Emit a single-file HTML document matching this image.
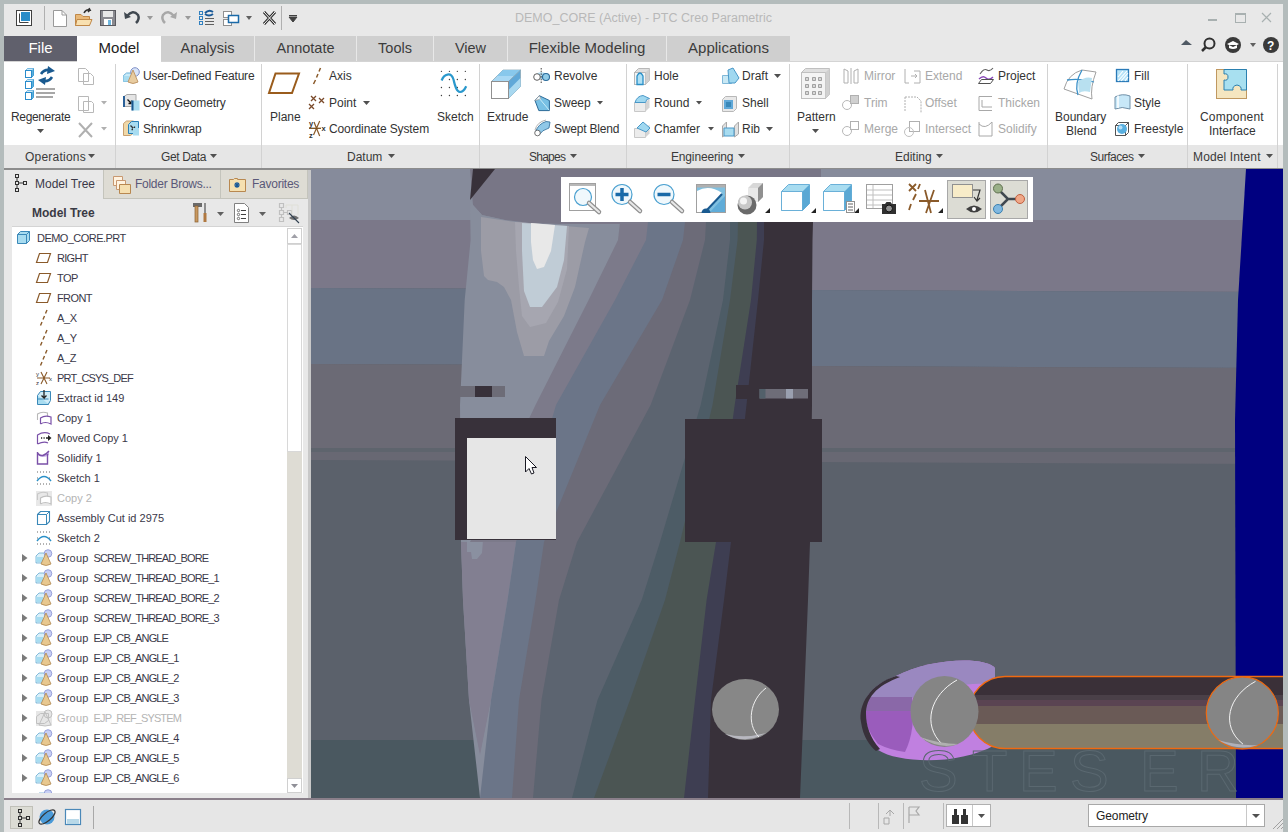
<!DOCTYPE html>
<html><head><meta charset="utf-8">
<style>
*{margin:0;padding:0;box-sizing:border-box}
html,body{width:1288px;height:832px;overflow:hidden;background:#b4bcbc;font-family:"Liberation Sans",sans-serif;color:#333}
.a{position:absolute}
.t{position:absolute;white-space:nowrap;line-height:1}
#title{left:4px;top:4px;width:1279px;height:32px;background:#e8e8e8}
#tabs{left:4px;top:36px;width:1279px;height:25px;background:#e8e8e8}
.tab{position:absolute;top:0;height:25px;background:#cfcfcf;color:#3c3c3c;font-size:14.5px;text-align:center;line-height:24px}
#ribbon{left:4px;top:61px;width:1279px;height:84px;background:#fff;border-top:1px solid #d4d4d4}
#glabels{left:4px;top:145px;width:1279px;height:23px;background:#e6e6e6}
.gl{position:absolute;top:6px;font-size:12px;color:#3a3a3a;white-space:nowrap;line-height:1}
.sep{position:absolute;width:1px;background:#d2d2d2}
.rb{position:absolute;font-size:12px;color:#333;white-space:nowrap;line-height:1}
.dis{color:#a8a8a8}
.arr{display:inline-block;width:0;height:0;border-left:3.5px solid transparent;border-right:3.5px solid transparent;border-top:4px solid #555;vertical-align:middle;margin-left:6px}
#panel{left:4px;top:170px;width:307px;height:628px;background:#e8e8e8}
#tree{left:12px;top:227px;width:291px;height:566px;background:#fff}
.tr{position:absolute;font-size:11px;letter-spacing:-0.45px;color:#353545;white-space:nowrap;line-height:1}
#status{left:0;top:798px;width:1288px;height:34px;background:#e6e6e6}
</style></head><body>
<div class="a" id="title"></div>
<div class="t" style="left:515px;top:11.5px;font-size:12.5px;color:#b8b8b8">DEMO_CORE (Active) - PTC Creo Parametric</div>
<div class="a" id="tabs"></div>
<div class="tab" style="left:4px;top:36px;width:73px;background:#60606c;color:#fff;font-size:15px">File</div>
<div class="tab" style="left:77px;top:36px;width:84px;background:#fff;color:#222;font-size:15px">Model</div>
<div class="tab" style="left:161px;top:36px;width:93px">Analysis</div>
<div class="tab" style="left:255px;top:36px;width:101px">Annotate</div>
<div class="tab" style="left:357px;top:36px;width:76px">Tools</div>
<div class="tab" style="left:434px;top:36px;width:73px">View</div>
<div class="tab" style="left:508px;top:36px;width:158px;font-size:15px">Flexible Modeling</div>
<div class="tab" style="left:667px;top:36px;width:123px;font-size:15px">Applications</div>
<div class="a" id="ribbon"></div>
<div class="a" id="glabels"></div>
<div class="a" style="left:77px;top:61px;width:84px;height:1px;background:#fff"></div>
<div class="a" style="left:4px;top:168px;width:1279px;height:2px;background:#8c8c8c"></div>
<div class="sep" style="left:115px;top:64px;height:104px"></div>
<div class="sep" style="left:261px;top:64px;height:104px"></div>
<div class="sep" style="left:479px;top:64px;height:104px"></div>
<div class="sep" style="left:626px;top:64px;height:104px"></div>
<div class="sep" style="left:789px;top:64px;height:104px"></div>
<div class="sep" style="left:1047px;top:64px;height:104px"></div>
<div class="sep" style="left:1187px;top:64px;height:104px"></div>
<div class="sep" style="left:1277px;top:64px;height:104px"></div>
<div class="rb" style="left:11px;top:111px;letter-spacing:-0.35px">Regenerate</div>
<div class="rb" style="left:143px;top:70px;letter-spacing:-0.2px">User-Defined Feature</div>
<div class="rb" style="left:143px;top:97px;letter-spacing:-0.1px">Copy Geometry</div>
<div class="rb" style="left:143px;top:123px;letter-spacing:-0.15px">Shrinkwrap</div>
<div class="rb" style="left:270px;top:111px">Plane</div>
<div class="rb" style="left:329px;top:70px">Axis</div>
<div class="rb" style="left:329px;top:97px">Point</div>
<div class="rb" style="left:329px;top:123px;letter-spacing:-0.12px">Coordinate System</div>
<div class="rb" style="left:437px;top:111px">Sketch</div>
<div class="rb" style="left:487px;top:111px">Extrude</div>
<div class="rb" style="left:554px;top:70px">Revolve</div>
<div class="rb" style="left:554px;top:97px">Sweep</div>
<div class="rb" style="left:554px;top:123px;letter-spacing:-0.2px">Swept Blend</div>
<div class="rb" style="left:654px;top:70px">Hole</div>
<div class="rb" style="left:654px;top:97px">Round</div>
<div class="rb" style="left:654px;top:123px">Chamfer</div>
<div class="rb" style="left:742px;top:70px">Draft</div>
<div class="rb" style="left:742px;top:97px">Shell</div>
<div class="rb" style="left:742px;top:123px">Rib</div>
<div class="rb" style="left:797px;top:111px">Pattern</div>
<div class="rb dis" style="left:864px;top:70px">Mirror</div>
<div class="rb dis" style="left:864px;top:97px">Trim</div>
<div class="rb dis" style="left:864px;top:123px">Merge</div>
<div class="rb dis" style="left:925px;top:70px">Extend</div>
<div class="rb dis" style="left:925px;top:97px">Offset</div>
<div class="rb dis" style="left:925px;top:123px">Intersect</div>
<div class="rb" style="left:998px;top:70px">Project</div>
<div class="rb dis" style="left:998px;top:97px">Thicken</div>
<div class="rb dis" style="left:998px;top:123px">Solidify</div>
<div class="rb" style="left:1055px;top:111px">Boundary</div>
<div class="rb" style="left:1066px;top:125px">Blend</div>
<div class="rb" style="left:1134px;top:70px">Fill</div>
<div class="rb" style="left:1134px;top:97px">Style</div>
<div class="rb" style="left:1134px;top:123px">Freestyle</div>
<div class="rb" style="left:1200px;top:111px;letter-spacing:0.2px">Component</div>
<div class="rb" style="left:1209px;top:125px">Interface</div>
<div class="gl" style="left:25px;top:151px;letter-spacing:0.23px">Operations</div>
<div class="gl" style="left:161px;top:151px;letter-spacing:-0.37px">Get Data</div>
<div class="gl" style="left:347px;top:151px">Datum</div>
<div class="gl" style="left:529px;top:151px;letter-spacing:-0.75px">Shapes</div>
<div class="gl" style="left:671px;top:151px;letter-spacing:-0.16px">Engineering</div>
<div class="gl" style="left:895px;top:151px">Editing</div>
<div class="gl" style="left:1090px;top:151px;letter-spacing:-0.48px">Surfaces</div>
<div class="gl" style="left:1193px;top:151px;letter-spacing:0.13px">Model Intent</div>

<svg class="a" style="left:0;top:60px" width="1288" height="110" viewBox="0 60 1288 110">
<g fill="none">
<!-- group label arrows -->
<path d="M88,154 h7 l-3.5,4z M210,154 h7 l-3.5,4z M388,154 h7 l-3.5,4z M570,154 h7 l-3.5,4z M738,154 h7 l-3.5,4z M936,154 h7 l-3.5,4z M1138,154 h7 l-3.5,4z M1266,154 h7 l-3.5,4z" fill="#505050"/>
<!-- dropdown arrows in ribbon -->
<path d="M37,129 h7 l-3.5,4z M812,129 h7 l-3.5,4z" fill="#505050"/>
<path d="M101,101 h6 l-3,3.5z M101,127 h6 l-3,3.5z" fill="#b0b0b0"/>
<path d="M363,101 h7 l-3.5,4z M597,101 h6 l-3,3.5z M696,101 h6 l-3,3.5z M708,127 h6 l-3,3.5z M774,74 h7 l-3.5,4z M766,127 h7 l-3.5,4z" fill="#505050"/>
<!-- Regenerate -->
<g id="cube3">
<path d="M25.5,70.5 l2,-2 h6 v7 l-2,2 h-6z" fill="#fff" stroke="#2a8ccc"/>
<path d="M25.5,70.5 l2,-2 h6 l-2,2z" fill="#c8e8f8"/>
<path d="M31.5,70.5 l2,-2 v7 l-2,2z" fill="#5ab0dc"/>
<rect x="25.5" y="70.5" width="6" height="7" fill="#fff" stroke="#2a8ccc"/>
</g>
<use href="#cube3" y="11"/>
<use href="#cube3" y="22"/>
<path d="M36,89 H55 M36,93 H55 M36,97 H53" stroke="#8a8a8a" stroke-width="1.3"/>
<path d="M41,74 Q44,69 50,70" stroke="#1a5a90" stroke-width="2.6"/>
<path d="M48,66 L55,71 L47,74 Z" fill="#1a5a90"/>
<path d="M52,77 Q49,82 43,81" stroke="#1a5a90" stroke-width="2.6"/>
<path d="M45,85 L38,80 L46,77 Z" fill="#1a5a90"/>
<!-- copy/paste/delete gray -->
<path d="M78.5,68.5 h7 l3,3 v10 h-10z M83.5,73.5 h7 l3,3 v8 h-10z" fill="#fff" stroke="#b8b8b8"/>
<path d="M78.5,96.5 h10 v14 h-10z M83.5,101.5 h8 l2,2 v9 h-10z" fill="#fff" stroke="#b8b8b8"/>
<path d="M79,123 L92,137 M92,123 L79,137" stroke="#b0b0b0" stroke-width="2"/>
<!-- get data icons -->
<path d="M123.5,75.5 l3,-2.5 h6 v6 l-3,2.5 h-6z" fill="#c8eaf8" stroke="#6ab0d8"/>
<rect x="123.5" y="76" width="6" height="5.5" fill="#a8dcf0"/>
<circle cx="135" cy="72" r="4.3" fill="#d8e4f8" stroke="#8090c8"/>
<path d="M133,70 L128,82 Q133,85 138,82 Z" fill="#e8cca0" stroke="#c0986a"/>
<path d="M124,96.5 l3,-2 h9 v10 l-3,2 h-9z" fill="#e4e4e4" stroke="#a8a8a8"/>
<rect x="123" y="96" width="2" height="11" fill="#2a6098"/>
<path d="M127.5,99.5 l4,4 M131.5,100.5 v3 h-3" stroke="#111" stroke-width="1.3"/>
<rect x="131.5" y="100.5" width="8" height="10" fill="#a8dcf0"/>
<rect x="131.5" y="100.5" width="2" height="10" fill="#1a5890"/>
<path d="M123.5,123.5 l3,-2.5 h7 v12 l-3,2.5 h-7z" fill="#f0d8a8" stroke="#c8a070"/>
<path d="M128.5,124.5 l3,-3 h7 v9 l-3,3 h-7z" fill="#a8dcf0" stroke="#2a80b8"/>
<path d="M130.5,125.5 l4,4 M134.5,126.5 v3 h-3" stroke="#333" stroke-width="1.3"/>
<rect x="133" y="128" width="6" height="7.5" fill="#a8dcf0"/>
<!-- Plane -->
<path d="M275.5,73.5 H299 L292,93 H269z" stroke="#9a5c1c" stroke-width="2"/>
<path d="M320.5,68 L319,71.5 M318,74 L316.5,77.5 M315.5,80 L313.5,84" stroke="#8a5a2a" stroke-width="1.5"/>
<path d="M311,96 l5,5 m0,-5 l-5,5 M319,98 l5,5 m0,-5 l-5,5 M309,104 l5,5 m0,-5 l-5,5" stroke="#7a4a2a" stroke-width="1.3"/>
<path d="M314,122 L319.7,136 M319.7,121 L313.5,135" stroke="#8a5a2a" stroke-width="1.2"/>
<path d="M309,128.3 H321" stroke="#7a5020" stroke-width="1.3"/>
<text x="309" y="126" font-size="7.5" fill="#333" font-family="Liberation Sans" font-weight="bold">y</text>
<text x="309" y="137.5" font-size="7.5" fill="#333" font-family="Liberation Sans" font-weight="bold">z</text>
<text x="321.5" y="131" font-size="7.5" fill="#333" font-family="Liberation Sans" font-weight="bold">x</text>
<!-- Sketch -->
<path d="M441.4,71.3h.1M449.4,71.3h.1M457.3,71.3h.1M465.3,71.3h.1M449.4,79.5h.1M457.3,79.5h.1M465.3,79.5h.1M441.4,87.5h.1M449.4,87.5h.1M457.3,87.5h.1M441.4,95.5h.1M449.4,95.5h.1M457.3,95.5h.1M465.3,95.5h.1" stroke="#404040" stroke-width="1.3" stroke-linecap="round"/>
<path d="M441.6,80.5 C444,74 451,71.5 453.5,79.5 C455,86 456.5,92 460,92 C463,92 465,89 466.2,86.3" stroke="#2a98cc" stroke-width="2.2"/>
<!-- Extrude -->
<path d="M491.5,81.5 L503,70 H520.5 L508.5,81.5 Z" fill="#a8d8f4" stroke="#8aa8b8" stroke-width="0.8"/>
<path d="M503,70 H520.5 L514,76 H497Z" fill="#88c8ec"/>
<path d="M508.5,81.5 L520.5,70 V86.5 L508.5,98.5 Z" fill="#60a8d8" stroke="#8aa8b8" stroke-width="0.8"/>
<path d="M508.5,90 L520.5,78 V86.5 L508.5,98.5 Z" fill="#a8d8f0"/>
<rect x="491.5" y="81.5" width="17" height="17" fill="#fff" stroke="#909090"/>
<!-- Revolve, sweep, swept blend -->
<path d="M537,73.5 Q541,71 546,73.5 V80 Q541,78 537,80 Z" fill="#b8e0f4"/>
<circle cx="537" cy="77" r="3.3" fill="#fff" stroke="#606060"/>
<circle cx="546" cy="77" r="3.5" fill="#90cce8" stroke="#2a6a9a" stroke-width="1.1"/>
<path d="M541.2,68 V84" stroke="#404040" stroke-dasharray="1.5,1.2"/>
<path d="M535,100.5 L539.3,95.7 L549.4,100.5 V110.6 H538.8 Z" fill="#78c0e4" stroke="#2a6a98"/>
<path d="M535,100.5 L539.3,95.7 L541,99 Z" fill="#fff" stroke="#909090" stroke-width="0.6"/>
<path d="M539,98 L549,110" stroke="#c8ecf8" stroke-width="1"/>
<path d="M535.5,132 Q538,124 546,121.5 L550,122 L549,128 Q542,130 539,135 Z" fill="#90c8e8" stroke="#2a6a98" stroke-width="0.8"/>
<path d="M535,130 Q537,122 546,120" stroke="#a0a0a0" stroke-width="0.8"/>
<circle cx="537.5" cy="133" r="2.8" fill="#fff" stroke="#505050" stroke-width="0.8"/>
<!-- Engineering icons -->
<path d="M634.5,72.5 l4,-4 h11 v12 l-4,4 h-11z" fill="#e0e0e0" stroke="#b8b8b8"/>
<rect x="634.5" y="72.5" width="11" height="12" fill="#f4f4f4" stroke="#b8b8b8"/>
<path d="M645.5,72.5 l4,-4 v12 l-4,4z" fill="#d0d0d0"/>
<path d="M637,84.5 V76 Q640,70 643,76 V84.5 Z" fill="#b0e0f4" stroke="#2a90c8" stroke-width="1.3"/>
<path d="M634.5,102.5 h11 v9 h-11z" fill="#ececec" stroke="#c8c8c8"/>
<path d="M645.5,102.5 l4,-4 v9 l-4,4z" fill="#d4d4d4"/>
<path d="M635,102.5 Q637,96 643,95.5 L649.5,98.5 Q646,98.5 645.5,102.5 Z" fill="#a0d8f0" stroke="#4a98c8"/>
<path d="M634.5,128.5 h11 v9 h-11z" fill="#ececec" stroke="#c8c8c8"/>
<path d="M645.5,128.5 l4,-4 v9 l-4,4z" fill="#d4d4d4"/>
<path d="M637,128 L643,122 L650,128 L646,132 Z" fill="#a0d8f0" stroke="#4a98c8"/>
<path d="M722.5,75.5 h9 v8 h-9z" fill="#c8e8f4" stroke="#80b8d8"/>
<path d="M728,70 L733,68 L739,78 L735,83 H729 Z" fill="#a0d8f0" stroke="#4a98c8"/>
<path d="M722.5,99.5 l3,-3 h11 v12 l-3,3 h-11z" fill="#e8e8e8" stroke="#b8b8b8"/>
<rect x="724" y="100" width="9" height="9" fill="#60a8d8"/>
<rect x="726" y="102" width="5" height="5" fill="#3a88b8"/>
<path d="M722.5,126 l4,-4 v12 l-4,3z M734.5,126 l4,-4 v12 l-4,3z" fill="#e0e0e0" stroke="#a8a8a8"/>
<path d="M724,128 h10 v8 h-10z" fill="#a8dcf0" stroke="#4a98c8"/>
<!-- Pattern -->
<path d="M801.5,72.5 l4,-4 h24 v26 l-4,4 h-24z" fill="#e0e0e0" stroke="#c0c0c0"/>
<rect x="801.5" y="72.5" width="24" height="26" fill="#f4f4f4" stroke="#c0c0c0"/>
<path d="M825.5,72.5 l4,-4 v26 l-4,4z" fill="#d0d0d0"/>
<path d="M805.5,77.5h3v3h-3z M812.5,77.5h3v3h-3z M818.5,77.5h3v3h-3z M805.5,84.5h3v3h-3z M812.5,84.5h3v3h-3z M818.5,84.5h3v3h-3z M805.5,91.5h3v3h-3z M812.5,91.5h3v3h-3z M818.5,91.5h3v3h-3z" fill="#d8d8d8" stroke="#909090" stroke-width="0.8"/>
<!-- editing gray icons -->
<path d="M844,69 v14 h4 v-12z M858,69 v14 h-4 v-12z M851,68 v16" stroke="#b0b0b0"/>
<rect x="850.5" y="95.5" width="8" height="8" fill="#d0d0d0" stroke="#b0b0b0"/>
<circle cx="847" cy="105" r="4.5" stroke="#b8b8b8"/>
<rect x="850.5" y="121.5" width="8" height="8" fill="#fff" stroke="#b0b0b0"/>
<circle cx="847" cy="131" r="4.5" stroke="#b8b8b8"/>
<path d="M905,69 v14 h4 M914,71 h6 v12 h-6 M911,76 h6 l-2,-2 m2,2 l-2,2" stroke="#b0b0b0"/>
<path d="M905,97 h12 l4,4 v12 M905,97 v14" stroke="#b0b0b0" stroke-dasharray="2,1"/>
<rect x="909.5" y="121.5" width="10" height="10" stroke="#b0b0b0"/>
<circle cx="909" cy="132" r="4.5" stroke="#c0c0c0"/>
<path d="M980,74 Q984,68 987,70 Q990,72 993,68" stroke="#606060" stroke-width="1.1"/>
<path d="M979,79 Q983,75 986,78 Q989,81 993,77" stroke="#8a4ab8" stroke-width="1.4"/>
<path d="M978.5,83.5 l3,-4 h12 l-3,4z" stroke="#505050"/>
<path d="M992,96.5 h-13 v14 h13 M982,100 v7 h10" stroke="#a8a8a8"/>
<path d="M979,122 v14 h13 v-14 M979,124 Q985,130 992,122" stroke="#a8a8a8"/>
<!-- Boundary blend -->
<path d="M1064,89 Q1068,74 1082,70 L1096,72 Q1090,88 1092,99 Q1078,94 1064,89Z" fill="#fff" stroke="#a0a0a0"/>
<path d="M1082,70 Q1074,84 1078,95 M1067,80 Q1080,78 1094,82" stroke="#3a90c8" stroke-width="1.3"/>
<path d="M1078,82 Q1085,76 1092,78 L1090,92 Q1083,90 1079,93 Z" fill="#b8e0f0"/>
<rect x="1116.5" y="69.5" width="12" height="12" fill="#b8e4f8" stroke="#2a7ab8" stroke-width="1.3"/>
<path d="M1118,77 l5,-6 M1118,81 l9,-10 M1121,81 l7,-8 M1125,81 l3,-4" stroke="#fff" stroke-width="1.1"/>
<path d="M1115,97 Q1122,93 1130,96 V109 Q1122,106 1115,109 Z" fill="#c8e8f8" stroke="#7090a8"/>
<path d="M1118,95.5 V108" stroke="#fff" stroke-width="1.5"/>
<path d="M1115.5,125.5 l3,-3 h10 v10 l-3,3 h-10z M1115.5,125.5 h10 v10 M1125.5,125.5 l3,-3" stroke="#404040" stroke-width="0.9"/>
<circle cx="1122" cy="129" r="5" fill="#5ab0e0"/>
<circle cx="1120.5" cy="127.5" r="2" fill="#b8e0f8"/>
<!-- Component interface -->
<rect x="1216.5" y="69.5" width="30" height="29" fill="#f5e6c0" stroke="#c09860"/>
<path d="M1224,69.5 H1246.5 V90 H1241 Q1242,86 1237,85 Q1232,86 1233,90 H1224 V80 Q1228,81 1228,77 Q1228,73 1224,74 Z" fill="#a8e0f0" stroke="#2a80b0"/>
</g>
</svg>

<!-- QAT + window controls -->
<svg class="a" style="left:0;top:0" width="1288" height="170" viewBox="0 0 1288 170">
<g fill="none" stroke-linejoin="miter">
<rect x="16.5" y="10.5" width="15" height="15" fill="#fff" stroke="#404040"/>
<path d="M19.5,13.5 V22.5 H28.5" stroke="#404040"/>
<rect x="21" y="12" width="9" height="9" fill="#2a8cc8"/>
<rect x="44" y="6" width="1" height="24" fill="#b0b0b0"/>
<path d="M53.5,10.5 H62 L66.5,15 V26.5 H53.5 Z" fill="#fff" stroke="#9a9a9a"/>
<path d="M62,10.5 V15 H66.5" stroke="#9a9a9a"/>
<path d="M75.5,14.5 H81 L83,16.5 H89.5 V25.5 H75.5 Z" fill="#e8b878" stroke="#c08848"/>
<path d="M77,19.5 H92 L89.5,25.5 H75.5 Z" fill="#f8e0b0" stroke="#c08848"/>
<path d="M84,13 Q86,9 90,10 L89,8 M90,10 L88,12" stroke="#303030" stroke-width="1.5"/>
<rect x="100.5" y="10.5" width="15" height="15" fill="#8a8a90" stroke="#5a5a60"/>
<rect x="103" y="11" width="10" height="6" fill="#e8e8e8"/>
<rect x="104" y="19" width="8" height="6" fill="#fff"/>
<rect x="108" y="20" width="3" height="5" fill="#70b8e0"/>
<path d="M127,16 Q133,9 138,15 Q140,19 136,23" stroke="#404850" stroke-width="2.5"/>
<path d="M124,12 L125,19 L131,17 Z" fill="#404850"/>
<path d="M147,16 H153 L150,20 Z" fill="#9a9a9a"/>
<path d="M174,16 Q168,9 163,15 Q161,19 165,23" stroke="#a8a8a8" stroke-width="2.5"/>
<path d="M177,12 L176,19 L170,17 Z" fill="#a8a8a8"/>
<path d="M185,16 H191 L188,20 Z" fill="#9a9a9a"/>
<rect x="199.5" y="11.5" width="3" height="3" stroke="#3080c0"/>
<rect x="199.5" y="16.5" width="3" height="3" stroke="#3080c0"/>
<rect x="199.5" y="21.5" width="3" height="3" stroke="#3080c0"/>
<path d="M205,18.5 H214 M205,21.5 H214 M205,24.5 H214" stroke="#606060"/>
<path d="M205,13 Q209,9 213,12 M213,14 Q209,17 205,14" stroke="#1a5a98" stroke-width="2"/>
<rect x="223.5" y="11.5" width="8" height="6" fill="#fff" stroke="#909090"/>
<rect x="223.5" y="19.5" width="8" height="6" fill="#fff" stroke="#909090"/>
<rect x="228.5" y="15.5" width="10" height="7" fill="#fff" stroke="#1a6aa8" stroke-width="1.5"/>
<path d="M246,16 H252 L249,20 Z" fill="#606060"/>
<path d="M264,12 L275,24 M275,12 L264,24" stroke="#303030" stroke-width="3"/>
<path d="M264,12 L275,24 M275,12 L264,24" stroke="#fff" stroke-width="1"/>
<rect x="281" y="6" width="1" height="24" fill="#b0b0b0"/>
<path d="M289,15.5 H297 M289,17 H297 L293,22 Z" stroke="#404040" fill="#404040"/>
<rect x="1208" y="19" width="9" height="2" fill="#a8b0b0"/>
<rect x="1235.5" y="13.5" width="10" height="9" stroke="#a8b0b0"/>
<rect x="1235" y="13" width="11" height="2" fill="#a8b0b0"/>
<path d="M1262,13 L1271,22 M1271,13 L1262,22" stroke="#a8b0b0" stroke-width="1.2"/>
<path d="M1181,45 L1186,40 L1192,45 Z" fill="#505a64"/>
<circle cx="1209.5" cy="43.5" r="5" stroke="#303030" stroke-width="2"/>
<path d="M1206,47 L1202,51" stroke="#303030" stroke-width="2.5"/>
<circle cx="1233" cy="45" r="8" fill="#3a3a3a"/>
<path d="M1227,44 L1233,41 L1239,44 L1233,47 Z M1229,45 V48 Q1233,50 1237,48 V45" fill="#fff"/>
<path d="M1250,43 H1256 L1253,47 Z" fill="#606060"/>
<circle cx="1271" cy="45" r="8" fill="#3a3a3a"/>
<text x="1267" y="50" font-family="Liberation Sans" font-weight="bold" font-size="12" fill="#fff" stroke="none">?</text>
</g>
</svg>

<div class="a" id="panel"></div>
<div class="a" id="tree"></div>
<div class="a" style="left:12px;top:226px;width:291px;height:1px;background:#d4d4d4"></div>
<div class="a" style="left:103px;top:170px;width:118px;height:29px;background:#dedcd4;border:1px solid #c4c4bc;border-top:none"></div>
<div class="a" style="left:220px;top:170px;width:88px;height:29px;background:#dedcd4;border:1px solid #c4c4bc;border-top:none"></div>
<div class="a" style="left:308px;top:170px;width:3px;height:628px;background:#c8c8c8"></div>
<div class="t" style="left:35px;top:177.5px;font-size:12px;color:#3a3848">Model Tree</div>
<div class="t" style="left:135px;top:177.5px;font-size:12px;color:#5a5878;letter-spacing:-0.27px">Folder Brows...</div>
<div class="t" style="left:252px;top:177.5px;font-size:12px;color:#5a5878;letter-spacing:-0.25px">Favorites</div>
<div class="t" style="left:32px;top:206.5px;font-size:12px;font-weight:bold;color:#3a3a44">Model Tree</div>
<div class="a" style="left:287px;top:228px;width:15px;height:565px;background:#dedcd4"></div>
<div class="a" style="left:287px;top:228px;width:15px;height:16px;background:#fff;border:1px solid #d0d0d0"></div>
<div class="a" style="left:287px;top:244px;width:15px;height:208px;background:#fff;border:1px solid #d8d8d8"></div>
<div class="a" style="left:287px;top:778px;width:15px;height:15px;background:#fff;border:1px solid #d0d0d0"></div>
<svg class="a" style="left:0;top:165px" width="311" height="70" viewBox="0 165 311 70">
<g fill="none">
<rect x="15.5" y="174.5" width="3" height="3" stroke="#303030"/>
<rect x="15.5" y="181.5" width="3" height="3" stroke="#303030"/>
<rect x="15.5" y="188.5" width="3" height="3" stroke="#303030"/>
<rect x="23.5" y="181.5" width="3" height="3" stroke="#303030"/>
<path d="M17,178 v3 M17,185 v3 M19,183 h4" stroke="#303030"/>
<path d="M113.5,176.5 h9 v9 h-9z" fill="#fff3e0" stroke="#c89870"/>
<path d="M116.5,180.5 h9 v9 h-9z" fill="#fff3e0" stroke="#c89870"/>
<path d="M119.5,184.5 h11 v9 h-11z" fill="#f5dfb0" stroke="#b88850"/>
<path d="M229.5,179.5 h4 l1,-1 h3 v1 h8 v12 h-16z" fill="#f5e0b0" stroke="#b88850"/>
<path d="M234,185 h6 M237,182 v6 M235,183 l4,4 M239,183 l-4,4" stroke="#1a5a98" stroke-width="1.2"/>
<rect x="193" y="203" width="9" height="4" fill="#6a6a6a"/>
<rect x="195" y="206" width="3" height="16" fill="#c89860" stroke="#8a6030" stroke-width="0.7"/>
<path d="M205,203 v10" stroke="#505050" stroke-width="1.2"/>
<rect x="203.5" y="213" width="3" height="9" fill="#b07840"/>
<path d="M217,212 h7 l-3.5,4z M259,212 h7 l-3.5,4z" fill="#606060"/>
<path d="M234.5,203.5 h10 l4,4 v15 h-14z" fill="#fff" stroke="#808080"/>
<circle cx="238.5" cy="210.5" r="1.2" stroke="#505050" stroke-width="0.8"/><circle cx="238.5" cy="214.5" r="1.2" stroke="#505050" stroke-width="0.8"/><circle cx="238.5" cy="218.5" r="1.2" stroke="#505050" stroke-width="0.8"/><path d="M241,210.5 h5 M241,214.5 h5 M241,218.5 h5" stroke="#404040"/>
<path d="M279.5,203.5 h4 v4 h-4z M279.5,210.5 h4 v4 h-4z M279.5,217.5 h4 v4 h-4z M287.5,210.5 h4 v4 h-4z M281.5,207.5 v3 M281.5,214.5 v3 M283.5,212.5 h4" stroke="#c0c0c0" stroke-width="1.2"/>
<path d="M286,205 h12 M292,205 v10 M298,205 v10 M286,205 v3" stroke="#e0e0d8"/>
<path d="M289,218 Q294,213 299,218 Q294,222 289,218Z" fill="#707070"/>
<path d="M289,213 L299,223" stroke="#304050" stroke-width="1.1"/>
</g>
</svg>
<svg class="a" style="left:287px;top:778px" width="15" height="15"><path d="M4,6 h7 l-3.5,4z" fill="#909098"/></svg>
<svg class="a" style="left:287px;top:228px" width="15" height="16"><path d="M4,10 h7 l-3.5,-4z" fill="#a0a0a8"/></svg>
<div class="a" style="left:0;top:0;width:1288px;height:793px;clip-path:inset(228px 1001px 0 12px)">
<div class="tr" style="left:37px;top:232.6px;letter-spacing:-0.55px;color:#3a3848">DEMO_CORE.PRT</div>
<div class="tr" style="left:57px;top:252.6px;letter-spacing:-0.7px;color:#3a3848">RIGHT</div>
<div class="tr" style="left:57px;top:272.6px;letter-spacing:-0.5px;color:#3a3848">TOP</div>
<div class="tr" style="left:57px;top:292.6px;letter-spacing:-0.6px;color:#3a3848">FRONT</div>
<div class="tr" style="left:57px;top:312.6px;letter-spacing:-0.4px;color:#3a3848">A_X</div>
<div class="tr" style="left:57px;top:332.6px;letter-spacing:-0.4px;color:#3a3848">A_Y</div>
<div class="tr" style="left:57px;top:352.6px;letter-spacing:-0.4px;color:#3a3848">A_Z</div>
<div class="tr" style="left:57px;top:372.6px;letter-spacing:-0.85px;color:#3a3848">PRT_CSYS_DEF</div>
<div class="tr" style="left:57px;top:392.6px;letter-spacing:0px;color:#3a3848">Extract id 149</div>
<div class="tr" style="left:57px;top:412.6px;letter-spacing:0px;color:#3a3848">Copy 1</div>
<div class="tr" style="left:57px;top:432.6px;letter-spacing:0px;color:#3a3848">Moved Copy 1</div>
<div class="tr" style="left:57px;top:452.6px;letter-spacing:0px;color:#3a3848">Solidify 1</div>
<div class="tr" style="left:57px;top:472.6px;letter-spacing:0px;color:#3a3848">Sketch 1</div>
<div class="tr" style="left:57px;top:492.6px;letter-spacing:0px;color:#b4b4b4">Copy 2</div>
<div class="tr" style="left:57px;top:512.6px;letter-spacing:0px;color:#3a3848">Assembly Cut id 2975</div>
<div class="tr" style="left:57px;top:532.6px;letter-spacing:0px;color:#3a3848">Sketch 2</div>
<div class="tr" style="left:57px;top:552.6px;letter-spacing:0.2px;color:#3a3848">Group</div><div class="tr" style="left:93.6px;top:552.6px;letter-spacing:-0.88px;color:#3a3848">SCREW_THREAD_BORE</div>
<div class="tr" style="left:57px;top:572.6px;letter-spacing:0.2px;color:#3a3848">Group</div><div class="tr" style="left:93.6px;top:572.6px;letter-spacing:-0.88px;color:#3a3848">SCREW_THREAD_BORE_1</div>
<div class="tr" style="left:57px;top:592.6px;letter-spacing:0.2px;color:#3a3848">Group</div><div class="tr" style="left:93.6px;top:592.6px;letter-spacing:-0.88px;color:#3a3848">SCREW_THREAD_BORE_2</div>
<div class="tr" style="left:57px;top:612.6px;letter-spacing:0.2px;color:#3a3848">Group</div><div class="tr" style="left:93.6px;top:612.6px;letter-spacing:-0.88px;color:#3a3848">SCREW_THREAD_BORE_3</div>
<div class="tr" style="left:57px;top:632.6px;letter-spacing:0.2px;color:#3a3848">Group</div><div class="tr" style="left:93.6px;top:632.6px;letter-spacing:-0.88px;color:#3a3848">EJP_CB_ANGLE</div>
<div class="tr" style="left:57px;top:652.6px;letter-spacing:0.2px;color:#3a3848">Group</div><div class="tr" style="left:93.6px;top:652.6px;letter-spacing:-0.88px;color:#3a3848">EJP_CB_ANGLE_1</div>
<div class="tr" style="left:57px;top:672.6px;letter-spacing:0.2px;color:#3a3848">Group</div><div class="tr" style="left:93.6px;top:672.6px;letter-spacing:-0.88px;color:#3a3848">EJP_CB_ANGLE_2</div>
<div class="tr" style="left:57px;top:692.6px;letter-spacing:0.2px;color:#3a3848">Group</div><div class="tr" style="left:93.6px;top:692.6px;letter-spacing:-0.88px;color:#3a3848">EJP_CB_ANGLE_3</div>
<div class="tr" style="left:57px;top:712.6px;letter-spacing:0.2px;color:#b4b4b4">Group</div><div class="tr" style="left:93.6px;top:712.6px;letter-spacing:-0.88px;color:#b4b4b4">EJP_REF_SYSTEM</div>
<div class="tr" style="left:57px;top:732.6px;letter-spacing:0.2px;color:#3a3848">Group</div><div class="tr" style="left:93.6px;top:732.6px;letter-spacing:-0.88px;color:#3a3848">EJP_CB_ANGLE_4</div>
<div class="tr" style="left:57px;top:752.6px;letter-spacing:0.2px;color:#3a3848">Group</div><div class="tr" style="left:93.6px;top:752.6px;letter-spacing:-0.88px;color:#3a3848">EJP_CB_ANGLE_5</div>
<div class="tr" style="left:57px;top:772.6px;letter-spacing:0.2px;color:#3a3848">Group</div><div class="tr" style="left:93.6px;top:772.6px;letter-spacing:-0.88px;color:#3a3848">EJP_CB_ANGLE_6</div>
<svg class="a" style="left:0;top:0" width="310" height="793" viewBox="0 0 310 793"><path d="M17.5,234.5 l3,-3 h9 v9 l-3,3 h-9z" fill="#a8dcf0" stroke="#3a88b8"/><path d="M17.5,234.5 h9 v9 M26.5,234.5 l3,-3" stroke="#3a88b8" fill="none"/><path d="M39.5,253.5 H50.5 L47.5,262.5 H36.5Z" fill="none" stroke="#8a5a2a" stroke-width="1.2"/><path d="M39.5,273.5 H50.5 L47.5,282.5 H36.5Z" fill="none" stroke="#8a5a2a" stroke-width="1.2"/><path d="M39.5,293.5 H50.5 L47.5,302.5 H36.5Z" fill="none" stroke="#8a5a2a" stroke-width="1.2"/><path d="M47,310 L45.5,313.5 M44.5,316 L43,319.5 M42,322 L40.5,325.5" stroke="#8a5a2a" stroke-width="1.4"/><path d="M47,330 L45.5,333.5 M44.5,336 L43,339.5 M42,342 L40.5,345.5" stroke="#8a5a2a" stroke-width="1.4"/><path d="M47,350 L45.5,353.5 M44.5,356 L43,359.5 M42,362 L40.5,365.5" stroke="#8a5a2a" stroke-width="1.4"/><path d="M41,372 L47,384 M47,372 L41,384 M37,378 H50" stroke="#8a5a2a" stroke-width="1.1"/><text x="36" y="376" font-size="6" font-family="Liberation Sans" fill="#333">y</text><text x="36" y="385" font-size="6" font-family="Liberation Sans" fill="#333">z</text><text x="49" y="381" font-size="6" font-family="Liberation Sans" fill="#333">x</text><path d="M37.5,395.5 h11 v9 h-11z" fill="#a8dcf0" stroke="#3a88b8"/><path d="M37.5,395.5 l3,-4 h10 v9 l-2,3.5" fill="#d0ecf8" stroke="#3a88b8"/><path d="M37.5,399 h11" stroke="#3a88b8"/><path d="M44,390 v8 l-2.5,-2.5 m2.5,2.5 l2.5,-2.5" stroke="#222" stroke-width="1.3" fill="none"/><path d="M37.5,420 v-6 Q42,411 47.5,413 v4" stroke="#b8b8b8" stroke-width="1.1" fill="none"/><path d="M40.5,424 v-6 Q45,415 51,417 v7 Q45,421 40.5,424" stroke="#7a50a8" stroke-width="1.2" fill="#fff"/><path d="M37.5,444 v-9 Q44,431 50,434 M37.5,444 Q44,441 48,443" stroke="#7a50a8" stroke-width="1.2" fill="none"/><path d="M41,438h1.2M43.5,438h1.2M46,438h4" stroke="#222" stroke-width="1.3" fill="none"/><path d="M48,435 L51.5,438 L48,441Z" fill="#222"/><path d="M37.5,453 Q42,459 49,451 V455 Q43,459 37.5,455Z" fill="#c8b0e8"/><path d="M37.5,452 v12 h10 v-10 M37.5,453 Q42,459 49,451" stroke="#7a50a8" stroke-width="1.4" fill="none"/><path d="M37,481 Q44,472 51,481" stroke="#2a90c8" stroke-width="1.5" fill="none"/><path d="M37,472h1M40,472h1M43,472h1M46,472h1M49,472h1M37,484h1M40,484h1M43,484h1M46,484h1M49,484h1M37,478h1M49,478h1" stroke="#666"/><rect x="36" y="491" width="16" height="15" fill="#e8e8e8"/><path d="M37.5,500 v-6 Q42,491 47.5,493 v4" stroke="#c8c8c8" stroke-width="1.1" fill="none"/><path d="M40.5,504 v-6 Q45,495 51,497 v7 Q45,501 40.5,504" stroke="#c0c0c0" stroke-width="1.2" fill="#fff"/><path d="M37.5,514.5 l3,-3 h9 v10 l-3,3 h-9z" fill="#fff" stroke="#3a88b8" stroke-width="1.1"/><path d="M37.5,514.5 h9 v10 M46.5,514.5 l3,-3" stroke="#3a88b8" fill="none"/><path d="M37,541 Q44,532 51,541" stroke="#2a90c8" stroke-width="1.5" fill="none"/><path d="M37,532h1M40,532h1M43,532h1M46,532h1M49,532h1M37,544h1M40,544h1M43,544h1M46,544h1M49,544h1M37,538h1M49,538h1" stroke="#666"/><path d="M22,554 L27.5,558 L22,562Z" fill="#7a7a7a"/><path d="M36,556 l3,-3 h7 v7 l-3,3 h-7z" fill="#d8f0fa" stroke="#6aaad0" stroke-width="0.8"/><rect x="36" y="557" width="7" height="5" fill="#a8dcf0"/><circle cx="48" cy="553.5" r="3.8" fill="#c8d0f4" stroke="#8890d0" stroke-width="0.8"/><path d="M46,553 L41,564 Q46,567 51,564Z" fill="#e8c890" stroke="#b08850" stroke-width="0.8"/><path d="M22,574 L27.5,578 L22,582Z" fill="#7a7a7a"/><path d="M36,576 l3,-3 h7 v7 l-3,3 h-7z" fill="#d8f0fa" stroke="#6aaad0" stroke-width="0.8"/><rect x="36" y="577" width="7" height="5" fill="#a8dcf0"/><circle cx="48" cy="573.5" r="3.8" fill="#c8d0f4" stroke="#8890d0" stroke-width="0.8"/><path d="M46,573 L41,584 Q46,587 51,584Z" fill="#e8c890" stroke="#b08850" stroke-width="0.8"/><path d="M22,594 L27.5,598 L22,602Z" fill="#7a7a7a"/><path d="M36,596 l3,-3 h7 v7 l-3,3 h-7z" fill="#d8f0fa" stroke="#6aaad0" stroke-width="0.8"/><rect x="36" y="597" width="7" height="5" fill="#a8dcf0"/><circle cx="48" cy="593.5" r="3.8" fill="#c8d0f4" stroke="#8890d0" stroke-width="0.8"/><path d="M46,593 L41,604 Q46,607 51,604Z" fill="#e8c890" stroke="#b08850" stroke-width="0.8"/><path d="M22,614 L27.5,618 L22,622Z" fill="#7a7a7a"/><path d="M36,616 l3,-3 h7 v7 l-3,3 h-7z" fill="#d8f0fa" stroke="#6aaad0" stroke-width="0.8"/><rect x="36" y="617" width="7" height="5" fill="#a8dcf0"/><circle cx="48" cy="613.5" r="3.8" fill="#c8d0f4" stroke="#8890d0" stroke-width="0.8"/><path d="M46,613 L41,624 Q46,627 51,624Z" fill="#e8c890" stroke="#b08850" stroke-width="0.8"/><path d="M22,634 L27.5,638 L22,642Z" fill="#7a7a7a"/><path d="M36,636 l3,-3 h7 v7 l-3,3 h-7z" fill="#d8f0fa" stroke="#6aaad0" stroke-width="0.8"/><rect x="36" y="637" width="7" height="5" fill="#a8dcf0"/><circle cx="48" cy="633.5" r="3.8" fill="#c8d0f4" stroke="#8890d0" stroke-width="0.8"/><path d="M46,633 L41,644 Q46,647 51,644Z" fill="#e8c890" stroke="#b08850" stroke-width="0.8"/><path d="M22,654 L27.5,658 L22,662Z" fill="#7a7a7a"/><path d="M36,656 l3,-3 h7 v7 l-3,3 h-7z" fill="#d8f0fa" stroke="#6aaad0" stroke-width="0.8"/><rect x="36" y="657" width="7" height="5" fill="#a8dcf0"/><circle cx="48" cy="653.5" r="3.8" fill="#c8d0f4" stroke="#8890d0" stroke-width="0.8"/><path d="M46,653 L41,664 Q46,667 51,664Z" fill="#e8c890" stroke="#b08850" stroke-width="0.8"/><path d="M22,674 L27.5,678 L22,682Z" fill="#7a7a7a"/><path d="M36,676 l3,-3 h7 v7 l-3,3 h-7z" fill="#d8f0fa" stroke="#6aaad0" stroke-width="0.8"/><rect x="36" y="677" width="7" height="5" fill="#a8dcf0"/><circle cx="48" cy="673.5" r="3.8" fill="#c8d0f4" stroke="#8890d0" stroke-width="0.8"/><path d="M46,673 L41,684 Q46,687 51,684Z" fill="#e8c890" stroke="#b08850" stroke-width="0.8"/><path d="M22,694 L27.5,698 L22,702Z" fill="#7a7a7a"/><path d="M36,696 l3,-3 h7 v7 l-3,3 h-7z" fill="#d8f0fa" stroke="#6aaad0" stroke-width="0.8"/><rect x="36" y="697" width="7" height="5" fill="#a8dcf0"/><circle cx="48" cy="693.5" r="3.8" fill="#c8d0f4" stroke="#8890d0" stroke-width="0.8"/><path d="M46,693 L41,704 Q46,707 51,704Z" fill="#e8c890" stroke="#b08850" stroke-width="0.8"/><path d="M22,714 L27.5,718 L22,722Z" fill="#7a7a7a"/><rect x="36" y="711" width="16" height="15" fill="#e6e6e6"/><path d="M36.5,716.5 l4,-3 h8 v7 l-4,3 h-8z M45,712 L39,725 Q45,727 51,725Z" fill="none" stroke="#c0c0c0"/><circle cx="48" cy="714" r="4" fill="none" stroke="#c0c0c0"/><path d="M22,734 L27.5,738 L22,742Z" fill="#7a7a7a"/><path d="M36,736 l3,-3 h7 v7 l-3,3 h-7z" fill="#d8f0fa" stroke="#6aaad0" stroke-width="0.8"/><rect x="36" y="737" width="7" height="5" fill="#a8dcf0"/><circle cx="48" cy="733.5" r="3.8" fill="#c8d0f4" stroke="#8890d0" stroke-width="0.8"/><path d="M46,733 L41,744 Q46,747 51,744Z" fill="#e8c890" stroke="#b08850" stroke-width="0.8"/><path d="M22,754 L27.5,758 L22,762Z" fill="#7a7a7a"/><path d="M36,756 l3,-3 h7 v7 l-3,3 h-7z" fill="#d8f0fa" stroke="#6aaad0" stroke-width="0.8"/><rect x="36" y="757" width="7" height="5" fill="#a8dcf0"/><circle cx="48" cy="753.5" r="3.8" fill="#c8d0f4" stroke="#8890d0" stroke-width="0.8"/><path d="M46,753 L41,764 Q46,767 51,764Z" fill="#e8c890" stroke="#b08850" stroke-width="0.8"/><path d="M22,774 L27.5,778 L22,782Z" fill="#7a7a7a"/><path d="M36,776 l3,-3 h7 v7 l-3,3 h-7z" fill="#d8f0fa" stroke="#6aaad0" stroke-width="0.8"/><rect x="36" y="777" width="7" height="5" fill="#a8dcf0"/><circle cx="48" cy="773.5" r="3.8" fill="#c8d0f4" stroke="#8890d0" stroke-width="0.8"/><path d="M46,773 L41,784 Q46,787 51,784Z" fill="#e8c890" stroke="#b08850" stroke-width="0.8"/><path d="M22,794 L27.5,798 L22,802Z" fill="#7a7a7a"/><path d="M36,796 l3,-3 h7 v7 l-3,3 h-7z" fill="#d8f0fa" stroke="#6aaad0" stroke-width="0.8"/><rect x="36" y="797" width="7" height="5" fill="#a8dcf0"/><circle cx="48" cy="793.5" r="3.8" fill="#c8d0f4" stroke="#8890d0" stroke-width="0.8"/><path d="M46,793 L41,804 Q46,807 51,804Z" fill="#e8c890" stroke="#b08850" stroke-width="0.8"/></svg>
</div>

<svg class="a" style="left:311px;top:169px" width="972" height="629" viewBox="311 169 972 629">
<rect x="311" y="169" width="972" height="629" fill="#5b616b"/>
<polygon fill="#868b9b" points="311,169 1283,169 1283,220 311,220"/>
<polygon fill="#7b7889" points="311,220 1283,220 1283,292 311,288"/>
<polygon fill="#697385" points="311,288 1283,292 1283,368 311,364"/>
<polygon fill="#6b6a75" points="311,364 1283,368 1283,448 311,448"/>
<rect x="311" y="448" width="972" height="4" fill="#5e646d"/>
<polygon fill="#686873" points="311,452 1283,452 1283,464 311,460"/>
<polygon fill="#4a5860" points="311,740 1283,740 1283,798 311,798"/>
<polygon fill="#000080" points="1246,169 1283,169 1283,798 1236,798 1235,420 1238,300"/>
<polygon fill="#787686" points="470,169 821,169 821,177 561,177 561,224 530,223 505,220 482,215 473,205"/>
<polygon fill="#38313a" points="473,169 495,169 470,200"/>
<polygon fill="#878d9c" points="470,200 473,205 482,215 505,220 530,223 561,224 803,224 800,542 790,798 480,798 469,700 463,600 461,542 460,405 464.7,300 470.6,240"/>
<polygon fill="#827f91" points="461,542 516,542 507.5,600 491,700 480,755 469,700 463,600"/>
<polygon fill="#8a90a0" points="467,540 483,540 482,553 477,559 472,559 471,552 467,552"/>
<polygon fill="#7c7a8a" points="620,222 618,240 588.6,300 535.5,405 500,480 470,542 800,542 803,222"/>
<polygon fill="#6b7588" points="648,222 646,240 615,300 556,405 516,542 507.5,600 491,700 480,798 790,798 794,700 798,600 800,542 801,405 801,300 802,240 803,222"/>
<polygon fill="#6c6b78" points="685,222 683,240 662,300 600,405 544,542 535.5,600 519,700 512,798 790,798 794,700 798,600 800,542 801,405 801,300 802,240 803,222"/>
<polygon fill="#5c6470" points="706,222 705,240 690,300 650.6,405 577,542 559,600 541.5,700 533,798 790,798 794,700 798,600 800,542 801,405 801,300 802,240 803,222"/>
<polygon fill="#4d5c66" points="730,222 730,240 723,300 700.7,405 660,542 641.7,600 597.5,700 572,798 790,798 794,700 798,600 800,542 801,405 801,300 802,240 803,222"/>
<polygon fill="#4b5553" points="738,222 737.6,240 730,300 712.5,405 680,542 665,600 630,700 594,798 790,798 794,700 798,600 800,542 801,405 801,300 802,240 803,222"/>
<polygon fill="#3e3e52" points="757,222 756.8,240 751,300 734.7,405 716,542 706.6,600 695,700 684,798 790,798 794,700 798,600 800,542 801,405 801,300 802,240 803,222"/>
<polygon fill="#38313a" points="764,222 764,240 758,300 746.5,405 731,542 724,600 711,700 708,798 800,798 804,700 808,600 810,542 812,405 812,300 812.5,240 813,222"/>
<polygon fill="#9c9ca6" points="481,217 515,222 589,228 585,242 575,287 564,316 549,341 544,356 524,356 517,332 511,300 504,287 497,282 488,280 484,276 481,251"/>
<polygon fill="#a6a6b0" points="515,222 569,226 567,269 558,302 546,323 530,327 522,316 519,287 516,251"/>
<polygon fill="#c0ccd6" points="522,223 567,226 564,260 557,287 542,307 530,307 524,291 522,251"/>
<polygon fill="#e8e8e8" points="531,223 555,225 551,251 544,267 537,269 533,260 531,242"/>
<rect x="455" y="418" width="101" height="122" fill="#38313a"/>
<rect x="467" y="438" width="89" height="101" fill="#e6e6e6"/>
<rect x="685" y="419" width="137" height="123" fill="#38313a"/>
<rect x="460" y="386" width="45" height="11" fill="#6d6c77"/>
<rect x="475" y="386" width="17" height="11" fill="#38313a"/>
<rect x="736" y="385" width="23" height="14" fill="#38313a"/>
<rect x="759.5" y="389" width="48.5" height="9.5" fill="#6e6d78"/>
<rect x="759.5" y="389" width="6" height="9.5" fill="#52606a"/>
<rect x="786" y="389" width="7" height="9.5" fill="#9aa0b0"/>
<ellipse cx="745.5" cy="709.5" rx="33.5" ry="30.5" fill="#878787"/>
<path d="M725,734 Q745,745 766,733 Q745,739 725,734Z" fill="#b8b8c0"/>
<path d="M766,688 C750,700 746,724 759,737" stroke="#f0f0f0" stroke-width="1" fill="none"/>
<path d="M896,676 C930,658 985,656 995,668 L995,745 C960,765 900,764 878,750 C858,735 856,700 896,676 Z" fill="#c080e0"/>
<path d="M896,676 C930,658 985,656 995,668 L995,684 C960,682 930,690 912,698 L867,697 C872,688 882,681 896,676 Z" fill="#9a88c0"/>
<path d="M867,697 L912,697 Q916,730 905,752 Q890,750 878,744 Q865,728 865,714 Z" fill="#9a5cbc"/>
<path d="M867,697 L912,697 L912,711 L865,711 Z" fill="#8a68a8"/>
<path d="M896,676 C870,684 858,705 861,722 C863,737 870,746 876,751 L880,749 C870,738 866,725 866,714 C866,698 876,686 900,677 Z" fill="#38303a"/>
<clipPath id="pc"><path d="M1005,676.5 L1283,676.5 L1283,748.5 L1005,748.5 A36,36 0 0 1 1005,676.5 Z"/></clipPath>
<g clip-path="url(#pc)"><rect x="960" y="675" width="323" height="74" fill="#857d68"/>
<rect x="960" y="675" width="323" height="20" fill="#3a3038"/>
<rect x="960" y="695" width="323" height="5" fill="#4a4048"/>
<rect x="960" y="700" width="323" height="6" fill="#5a4452"/>
<rect x="960" y="706" width="323" height="18" fill="#6a5a56"/></g>
<path d="M1005,676.5 L1283,676.5 M1005,748.5 L1283,748.5 M1005,676.5 A36,36 0 0 0 1005,748.5" stroke="#f06a10" stroke-width="1.3" fill="none"/>
<ellipse cx="944.5" cy="711.5" rx="34" ry="35.5" fill="#858585"/>
<path d="M957,680 C930,695 922,725 942,744" stroke="#f4f4f4" stroke-width="1" fill="none"/>
<path d="M920,737 Q940,750 958,744 Q940,744 920,737Z" fill="#b0b0b0"/>
<circle cx="1242.3" cy="712.9" r="36" fill="#858585" stroke="#f06a10" stroke-width="1.2"/>
<path d="M1255.5,681.4 C1228,696 1220,726 1243,744.2" stroke="#f4f4f4" stroke-width="1" fill="none"/>
<path d="M1218,740 Q1238,752 1258,745 Q1238,746 1218,740Z" fill="#b0b0b8"/>
<text x="919 972 1019 1070 1140 1197" y="791" font-family="Liberation Sans" font-size="58" fill="none" stroke="#5a6870" stroke-width="1">STESER</text>
</svg>
<svg class="a" style="left:561px;top:177px" width="472" height="45" viewBox="561 177 472 45">
<rect x="561" y="177" width="472" height="45" fill="#fff"/>
<g fill="none">
<rect x="569.5" y="183.5" width="26" height="27" fill="#fff" stroke="#a0a0a0"/>
<rect x="570" y="184" width="25" height="2" fill="#b8b8b8"/>
<circle cx="583" cy="197" r="8.5" fill="#f0f8fc" stroke="#4aa0d0" stroke-width="1.2"/>
<path d="M589,203 L599,212" stroke="#909090" stroke-width="4.5" stroke-linecap="round"/>
<path d="M589,203 L599,212" stroke="#e8e8e8" stroke-width="2.2" stroke-linecap="round"/>
<circle cx="622" cy="194.5" r="10" fill="#f0f8fc" stroke="#4aa0d0" stroke-width="1.2"/>
<path d="M615.5,194.5 h13 M622,188 v13" stroke="#1a6aa8" stroke-width="3.5"/>
<path d="M630,202 L640,211" stroke="#909090" stroke-width="4.5" stroke-linecap="round"/>
<path d="M630,202 L640,211" stroke="#e8e8e8" stroke-width="2.2" stroke-linecap="round"/>
<circle cx="664" cy="194.5" r="10" fill="#f0f8fc" stroke="#4aa0d0" stroke-width="1.2"/>
<path d="M657.5,194.5 h13" stroke="#1a6aa8" stroke-width="3.5"/>
<path d="M672,202 L682,211" stroke="#909090" stroke-width="4.5" stroke-linecap="round"/>
<path d="M672,202 L682,211" stroke="#e8e8e8" stroke-width="2.2" stroke-linecap="round"/>
<rect x="696.5" y="184.5" width="29" height="28" fill="#80c0e0" stroke="#a0a0a0"/>
<path d="M710,212 L725,196 V212Z" fill="#60acd8"/>
<path d="M697,191 Q709,184 722,193 L706,212 H697 Z" fill="#fff"/>
<rect x="697" y="185" width="28" height="2.5" fill="#b0b0b0"/>
<path d="M706,211 L722,194" stroke="#1a5a90" stroke-width="2"/>
<path d="M701.5,213 A4.5,4.5 0 0 1 710.5,213 Z" fill="#1a5a90"/>
<path d="M748,188 l5,-5 h10 v14 l-5,5 h-10z" fill="#d8d8d8"/>
<path d="M748,188 h10 v14 h-10z" fill="#e8e8e8"/>
<path d="M758,188 l5,-5 v14 l-5,5z" fill="#909090"/>
<circle cx="747" cy="205" r="9.5" fill="#6a6a6a"/>
<circle cx="745" cy="202.5" r="7" fill="#c8c8c8"/>
<circle cx="743.5" cy="201" r="3.5" fill="#f4f4f4"/>
<path d="M765,213 l5,-5 v5z M811,213 l5,-5 v5z M854,213 l5,-5 v5z M938,213 l5,-5 v5z" fill="#222"/>
<path d="M781.5,191.5 l7,-7 h21 v19 l-7,7 h-21z" fill="#a8dcf0" stroke="#6ab0d8"/>
<path d="M781.5,191.5 h21 v19 h-21z" fill="#fff" stroke="#6ab0d8"/>
<path d="M802.5,191.5 l7,-7 v19 l-7,7z" fill="#5aa8d4"/>
<path d="M823.5,191.5 l7,-7 h21 v19 l-7,7 h-21z" fill="#a8dcf0" stroke="#6ab0d8"/>
<path d="M823.5,191.5 h21 v19 h-21z" fill="#fff" stroke="#6ab0d8"/>
<path d="M844.5,191.5 l7,-7 v19 l-7,7z" fill="#5aa8d4"/>
<rect x="846.5" y="201.5" width="8" height="11" fill="#fff" stroke="#909090"/>
<path d="M848,204h5M848,207h5M848,210h5" stroke="#606060"/>
<rect x="866.5" y="184.5" width="26" height="24" fill="#fff" stroke="#a0a0a0"/>
<path d="M867,190h25M867,195h25M867,200h25M867,205h25M873,185v23" stroke="#c0c0c0"/>
<path d="M882,204 h3 l1.5,-2 h4 l1.5,2 h4 v10 h-14z" fill="#303030"/>
<circle cx="889" cy="208.5" r="3.5" fill="#909090" stroke="#101010"/>
<path d="M909,184 l7,7 m0,-7 l-7,7 M920,184 l-2,5 M916,194 l-3,6 M911,204 l-2,6 M925,190 L931,213 M934,190 L926,213 M919,201 H939" stroke="#8a5a2a" stroke-width="1.8"/>
<rect x="947.5" y="180.5" width="38" height="38" fill="#dcdcd4" stroke="#a8a8a8"/>
<rect x="952.5" y="184.5" width="20" height="13" fill="#f8ecc8" stroke="#909090"/>
<path d="M973,190 h7 l-3,10 M974,197 l3,4 l3,-3" stroke="#333" stroke-width="1.2"/>
<path d="M966,209 Q974,202 982,209 Q974,216 966,209Z" fill="#404040"/>
<circle cx="974" cy="209" r="2" fill="#fff"/>
<rect x="990.5" y="180.5" width="37" height="38" fill="#dcdcd4" stroke="#a8a8a8"/>
<path d="M998,189 L1008,199 L998,209 M1008,199 H1020" stroke="#404850" stroke-width="2.5"/>
<circle cx="998" cy="188.5" r="4.5" fill="#9ab088" stroke="#607050"/>
<circle cx="1020" cy="199" r="4.5" fill="#f0a888" stroke="#c06040"/>
<circle cx="998" cy="209" r="4.5" fill="#80b8e0" stroke="#3a80b0"/>
</g>
</svg>
<svg class="a" style="left:524px;top:454px" width="14" height="22" viewBox="0 0 14 22"><path d="M1.5,2.5 V18 L5,14.5 L7.5,20 L10,19 L8,13.5 H12.5 Z" fill="#fff" stroke="#1a1a24" stroke-width="1"/></svg>


<div class="a" style="left:4px;top:798px;width:1279px;height:2px;background:#8a7f8a"></div>
<div class="a" style="left:4px;top:800px;width:1279px;height:32px;background:#e6e6e6"></div>
<div class="a" style="left:10px;top:806px;width:23px;height:23px;background:#dcdcd4;border:1px solid #c0c0b8"></div>
<div class="a" style="left:93px;top:806px;width:1px;height:23px;background:#a8a8a8"></div>
<div class="a" style="left:849px;top:803px;width:1px;height:26px;background:#b8b8b8"></div>
<div class="a" style="left:878px;top:803px;width:1px;height:26px;background:#b8b8b8"></div>
<div class="a" style="left:903px;top:803px;width:1px;height:26px;background:#b8b8b8"></div>
<div class="a" style="left:943px;top:803px;width:1px;height:26px;background:#b8b8b8"></div>
<div class="a" style="left:946px;top:804px;width:45px;height:23px;background:#fff;border:1px solid #b0b0b0"></div>
<div class="a" style="left:972px;top:805px;width:1px;height:21px;background:#c8c8c8"></div>
<div class="a" style="left:1088px;top:804px;width:177px;height:23px;background:#fff;border:1px solid #a8a8a8"></div>
<div class="a" style="left:1246px;top:805px;width:1px;height:21px;background:#c8c8c8"></div>
<div class="t" style="left:1096px;top:810px;font-size:12px;color:#222;letter-spacing:-0.1px">Geometry</div>
<svg class="a" style="left:0;top:798px" width="1288" height="34" viewBox="0 798 1288 34">
<g fill="none">
<rect x="18.5" y="809.5" width="3" height="3" stroke="#303030"/>
<rect x="18.5" y="816.5" width="3" height="3" stroke="#303030"/>
<rect x="18.5" y="823.5" width="3" height="3" stroke="#303030"/>
<rect x="26.5" y="816.5" width="3" height="3" stroke="#303030"/>
<path d="M20,813 v3 M20,820 v3 M22,818 h4" stroke="#303030"/>
<circle cx="47" cy="817" r="7.5" fill="#4a9ad8"/>
<ellipse cx="47" cy="817" rx="10" ry="4" transform="rotate(-40 47 817)" stroke="#333" stroke-width="1.2"/>
<rect x="65.5" y="809.5" width="15" height="15" fill="#fff" stroke="#4a88b8" stroke-width="1.2"/>
<rect x="67" y="819" width="12" height="5" fill="#b8d8e8"/>
<path d="M886,814 l4,-4 l4,4 M890,810 v6 M884,818 h5 v6 h-5z" stroke="#a8a8a8"/>
<path d="M909,807 v16 M909,807 h10 l-3,4 l3,4 h-10" stroke="#a8a8a8" stroke-width="1.2"/>
<path d="M952,815 h7 v9 h-7z M961,815 h7 v9 h-7z M954,809 h3 v6 h-3z M963,809 h3 v6 h-3z" fill="#333"/>
<path d="M978,814 h7 l-3.5,4z M1252,814 h8 l-4,4z" fill="#505050"/>
<path d="M1273,829 l10,-10 M1277,829 l6,-6 M1281,829 l2,-2" stroke="#a0a0a0"/>
</g>
</svg>
</body></html>
